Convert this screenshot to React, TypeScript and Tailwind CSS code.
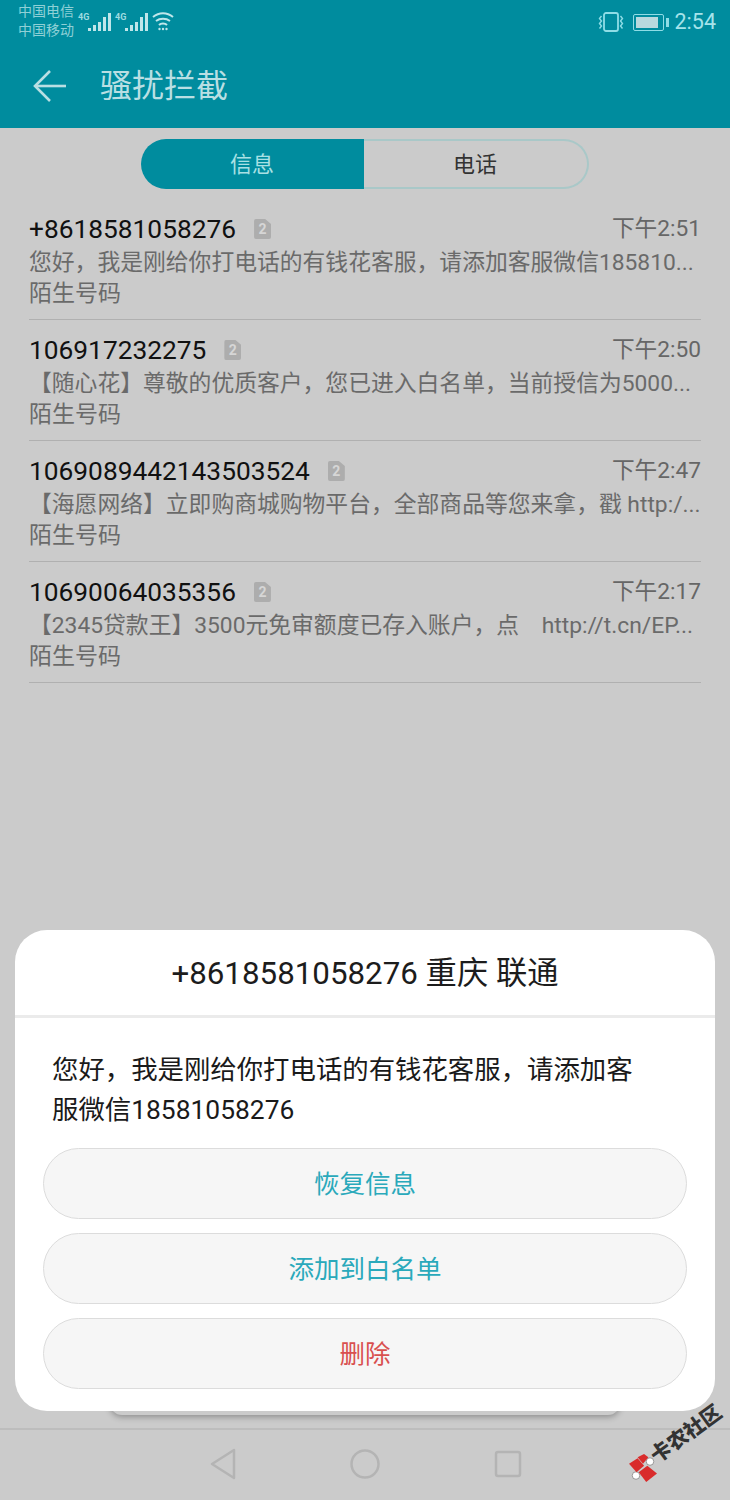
const FONT = "font-['Roboto','Noto_Sans_CJK_SC',sans-serif]";

const MESSAGES = [
  { from: '+8618581058276', time: '下午2:51', text: '您好，我是刚给你打电话的有钱花客服，请添加客服微信185810...' },
  { from: '106917232275', time: '下午2:50', text: '【随心花】尊敬的优质客户，您已进入白名单，当前授信为5000...' },
  { from: '1069089442143503524', time: '下午2:47', text: '【海愿网络】立即购商城购物平台，全部商品等您来拿，戳 http:/...' },
  { from: '10690064035356', time: '下午2:17', text: '【2345贷款王】3500元免审额度已存入账户，点    http://t.cn/EP...' },
];

function Signal() {
  return (
    <span className="relative block w-[31px] h-[18px]">
      <span className="absolute left-0 top-[-1px] text-[9px] leading-[10px] font-bold text-[#9fdbe0]">4G</span>
      <span className="absolute left-[10px] bottom-0 flex items-end gap-[2px]">
        <span className="w-[3px] h-[3px] bg-[#bfe6ea]" />
        <span className="w-[3px] h-[6px] bg-[#bfe6ea]" />
        <span className="w-[3px] h-[9px] bg-[#bfe6ea]" />
        <span className="w-[3px] h-[14px] bg-[#bfe6ea]" />
        <span className="w-[3px] h-[18px] bg-[#bfe6ea]" />
      </span>
    </span>
  );
}

function StatusBar() {
  return (
    <div className="h-[44px] flex items-start pl-[18px] pr-[14px] text-[#a5dde2]">
      <div className="text-[14px] leading-[19px] pt-[2px] w-[60px] text-[#8fd0d6] whitespace-nowrap">
        <div>中国电信</div>
        <div>中国移动</div>
      </div>
      <div className="flex gap-[6px] pt-[13px]">
        <Signal />
        <Signal />
      </div>
      <svg width="24" height="20" viewBox="0 0 24 20" className="mt-[11px] ml-[5px]" fill="none" stroke="#bfe6ea" strokeWidth="2">
        <path d="M2 6C8 1 16 1 22 6" />
        <path d="M5 10c4-3 10-3 14 0" />
        <path d="M8 14c2-2 6-2 8 0" />
        <circle cx="8.500" cy="18" r="1.200" fill="#bfe6ea" stroke="none" />
        <circle cx="12" cy="18" r="1.200" fill="#bfe6ea" stroke="none" />
        <circle cx="15.500" cy="18" r="1.200" fill="#bfe6ea" stroke="none" />
      </svg>
      <div className="ml-auto flex items-center h-[44px]">
        <svg width="26" height="20" viewBox="0 0 26 20" fill="none" stroke="#8fdde6" strokeWidth="1.800">
          <rect x="6" y="1" width="14" height="18" rx="2" />
          <path d="M3.500 4 1.500 6.500 3.500 9 1.500 11.500 3.500 14 1.500 16.500" strokeWidth="1.400" />
          <path d="M22.500 4 24.500 6.500 22.500 9 24.500 11.500 22.500 14 24.500 16.500" strokeWidth="1.400" />
        </svg>
        <span className="ml-[9px] w-[31px] h-[17px] border border-[#8fdde6] rounded-[2px] p-[2px] flex">
          <span className="w-[22px] bg-[#b9d9de]" />
        </span>
        <span className="ml-[2px] w-[3px] h-[9px] bg-[#8fdde6]" />
        <span className="ml-[6px] text-[21.500px] leading-[24px] text-[#a5e3ea]">2:54</span>
      </div>
    </div>
  );
}

function MessageRow({ from, time, text }: { from: string; time: string; text: string }) {
  return (
    <div className="h-[121px] border-b border-[#b0b0b0] pt-[12px]">
      <div className="flex items-center h-[36px]">
        <span className="text-[26.300px] leading-[36px] text-[#111111]">{from}</span>
        <span className="ml-[18px] w-[17px] h-[20px] rounded-[2px] bg-[#adadad] text-[#d6d6d6] text-[14px] leading-[21px] font-bold text-center [clip-path:polygon(0_0,65%_0,100%_25%,100%_100%,0_100%)]">2</span>
        <span className="ml-auto text-[22.700px] leading-[36px] text-[#666666] whitespace-nowrap">{time}</span>
      </div>
      <div className="text-[22.800px] leading-[30px] mt-[1px] text-[#6a6a6a] whitespace-pre">{text}</div>
      <div className="text-[23px] leading-[30px] mt-[1px] text-[#6a6a6a]">陌生号码</div>
    </div>
  );
}

function ActionButton({ label, color }: { label: string; color: string }) {
  return (
    <div className={`h-[71px] rounded-full border border-[#dcdcdc] bg-[#f6f6f6] flex items-center justify-center pt-[2px] text-[25.500px] ${color}`}>
      {label}
    </div>
  );
}

function Watermark() {
  return (
    <div className="absolute left-[629px] top-[1410px] w-[100px] h-[72px]">
      <svg width="28" height="28" viewBox="0 0 26 26" className="absolute left-0 top-[44px]">
        <circle cx="6.500" cy="20" r="3.500" fill="#ffffff" stroke="#8a8a8a" strokeWidth="0.800" />
        <circle cx="19.500" cy="7" r="3.500" fill="#ffffff" stroke="#8a8a8a" strokeWidth="0.800" />
        <path d="M0 9 8 4 14 11 7 17Z" fill="#d92b2b" />
        <path d="M8 3 14 0 18 3 13 9Z" fill="#d92b2b" />
        <path d="M9 17 17 11 26 18 16 26Z" fill="#d92b2b" />
      </svg>
      <span className="absolute left-[24px] top-[38px] -rotate-[36deg] origin-left text-[20.500px] leading-[20px] font-black text-[#333333] whitespace-nowrap">卡农社区</span>
    </div>
  );
}

export default function App() {
  return (
    <div className={`relative w-[730px] h-[1500px] overflow-hidden bg-[#cbcbcb] flex flex-col ${FONT}`}>
      <div className="h-[128px] bg-[#008c9e] shrink-0">
        <StatusBar />
        <div className="flex items-center h-[84px] pl-[33px]">
          <svg width="34" height="34" viewBox="0 0 34 34" fill="none" stroke="#b9dfe3" strokeWidth="2.600">
            <path d="M33 17H2" />
            <path d="M17 2 2 17l15 15" />
          </svg>
          <span className="ml-[33px] text-[32px] leading-[40px] text-[#b9dfe3]">骚扰拦截</span>
        </div>
      </div>

      <div className="flex-1 flex flex-col">
        <div className="pt-[11px] flex justify-center">
          <div className="mr-[1px] w-[448px] h-[50px] flex text-[22px]">
            <div className="w-[223px] rounded-l-full bg-[#008c9e] text-[#a9e0e4] flex items-center justify-center">信息</div>
            <div className="flex-1 rounded-r-full border-2 border-l-0 border-[#a9c8c8] text-[#333333] flex items-center justify-center">电话</div>
          </div>
        </div>
        <div className="px-[29px] pt-[10px]">
          {MESSAGES.map(m => (
            <MessageRow key={m.from} {...m} />
          ))}
        </div>
      </div>

      {/* 하단 내비게이션 */}
      <div className="h-[72px] border-t-2 border-[#bdbdbd] flex items-center justify-center gap-[114px] pl-[2px] pb-[2px] shrink-0">
        <svg width="26" height="32" viewBox="0 0 26 32" fill="none" stroke="#b4b4b4" strokeWidth="2.500" strokeLinejoin="round">
          <path d="M24 2v28L2 16Z" />
        </svg>
        <svg width="30" height="30" viewBox="0 0 30 30" fill="none" stroke="#b4b4b4" strokeWidth="2.500">
          <circle cx="15" cy="15" r="13.500" />
        </svg>
        <svg width="28" height="28" viewBox="0 0 28 28" fill="none" stroke="#b4b4b4" strokeWidth="2.500">
          <rect x="2" y="2" width="24" height="24" rx="2" />
        </svg>
      </div>

      {/* 弹窗 */}
      <div className="absolute left-[110px] top-[1380px] w-[510px] h-[35px] rounded-[12px] shadow-[0_2px_6px_rgba(0,0,0,0.3)]" />
      <div className="absolute left-[15px] top-[930px] w-[700px] h-[481px] rounded-[32px] bg-white">
        <div className="h-[88px] border-b-[3px] border-[#ebebeb] flex items-center justify-center pt-[4px] text-[31.300px] text-[#1c1c1c]">
          +8618581058276 重庆 联通
        </div>
        <div className="pl-[37px] pr-[70px] pt-[32px] text-[26.400px] leading-[40px] text-[#1a1a1a]">
          您好，我是刚给你打电话的有钱花客服，请添加客
          <br />
          服微信18581058276
        </div>
        <div className="px-[28px] mt-[18px] flex flex-col gap-[14px]">
          <ActionButton label="恢复信息" color="text-[#2aa9bb]" />
          <ActionButton label="添加到白名单" color="text-[#2aa9bb]" />
          <ActionButton label="删除" color="text-[#d9504f]" />
        </div>
      </div>

      <Watermark />
    </div>
  );
}
